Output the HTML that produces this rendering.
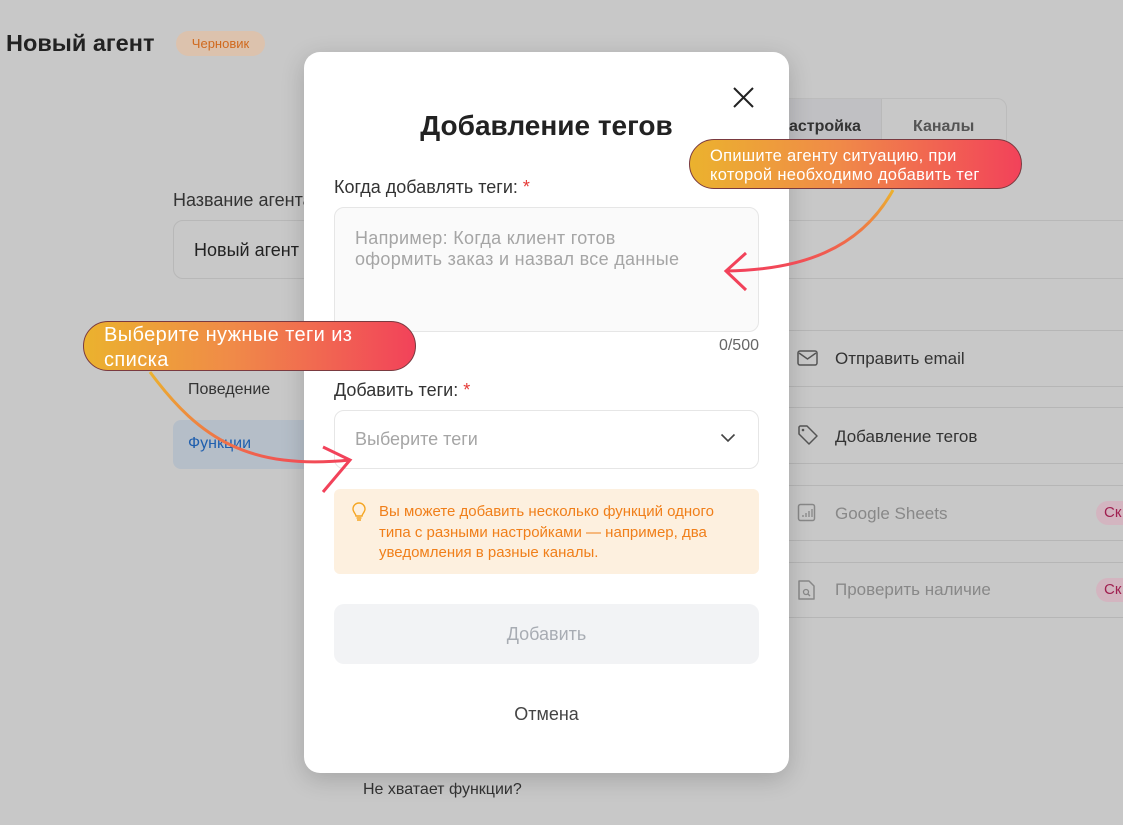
<!DOCTYPE html>
<html><head><meta charset="utf-8"><style>
*{box-sizing:border-box;margin:0;padding:0}
body{width:1123px;height:825px;overflow:hidden;background:#c8c8c8;font-family:"Liberation Sans",sans-serif;position:relative;color:#222}
.a{position:absolute}
.line{position:absolute;left:789px;width:334px;height:1px;background:#b6b6b6}
.row{position:absolute;left:835px;font-size:17px}
.ic{position:absolute;left:797px}
.tip{position:absolute;background:linear-gradient(90deg,#ebb22e,#f08a48 45%,#f2425a);border:1px solid #7a3a40;border-radius:26px;color:#fff;white-space:nowrap}
</style></head><body>
<div class="a" style="left:6px;top:30px;font-size:23.5px;font-weight:bold;color:#222">Новый агент</div>
<div class="a" style="left:176px;top:31px;width:89px;height:25px;border-radius:13px;background:#dcc2ad;color:#d0691e;font-size:13px;text-align:center;line-height:25px">Черновик</div>
<div class="a" style="left:760px;top:98px;width:247px;height:58px;border:1px solid #bcbcbc;border-radius:10px;background:#c8c8c8"></div>
<div class="a" style="left:760px;top:99px;width:122px;height:56px;background:#c0c0c3;border-right:1px solid #b9b9b9"></div>
<div class="a" style="left:789px;top:118px;font-size:16px;font-weight:bold;color:#333">астройка</div>
<div class="a" style="left:913px;top:118px;font-size:16px;font-weight:bold;color:#555">Каналы</div>
<div class="a" style="left:173px;top:190px;font-size:18px;color:#333">Название агента</div>
<div class="a" style="left:173px;top:220px;width:1000px;height:59px;border:1px solid #b8b8b8;border-radius:10px"></div>
<div class="a" style="left:194px;top:240px;font-size:18px;color:#222">Новый агент</div>
<div class="a" style="left:188px;top:381px;font-size:16px;color:#333">Поведение</div>
<div class="a" style="left:173px;top:420px;width:160px;height:49px;border-radius:8px;background:#b5bec8"></div>
<div class="a" style="left:188px;top:435px;font-size:16px;color:#1f5fae">Функции</div>
<div class="line" style="top:330px"></div><div class="line" style="top:386px"></div>
<div class="line" style="top:407px"></div><div class="line" style="top:463px"></div>
<div class="line" style="top:485px"></div><div class="line" style="top:540px"></div>
<div class="line" style="top:562px"></div><div class="line" style="top:617px"></div>
<svg class="ic" style="top:349px" width="22" height="18" viewBox="0 0 22 18"><rect x="1" y="2" width="19" height="14" rx="2" fill="none" stroke="#555" stroke-width="1.5"/><path d="M2 4l8.5 6 8.5-6" fill="none" stroke="#555" stroke-width="1.5"/></svg>
<div class="row" style="top:349px;color:#333">Отправить email</div>
<svg class="ic" style="top:424px" width="22" height="22" viewBox="0 0 22 22"><path d="M2 3v7l10 10 8-8L10 2H3z" fill="none" stroke="#555" stroke-width="1.5" stroke-linejoin="round"/><circle cx="6" cy="6" r="1.3" fill="#555"/></svg>
<div class="row" style="top:427px;color:#333">Добавление тегов</div>
<svg class="ic" style="top:503px" width="20" height="20" viewBox="0 0 20 20"><rect x="1.5" y="1.5" width="16" height="16" rx="2" fill="none" stroke="#888" stroke-width="1.5"/><path d="M6 14v-2M9 14v-4M12 14v-6M15 14V6" stroke="#888" stroke-width="1.3"/></svg>
<div class="row" style="top:504px;color:#888">Google Sheets</div>
<div class="a" style="left:1096px;top:501px;width:50px;height:24px;border-radius:12px;background:#d3b5c0;color:#a02050;font-size:15px;line-height:24px;padding-left:8px">Ск</div>
<svg class="ic" style="top:579px" width="20" height="22" viewBox="0 0 20 22"><path d="M2 2h10l5 5v13H2z" fill="none" stroke="#888" stroke-width="1.5" stroke-linejoin="round"/><circle cx="9" cy="13" r="2.5" fill="none" stroke="#888" stroke-width="1.3"/><path d="M11 15l2 2" stroke="#888" stroke-width="1.3"/></svg>
<div class="row" style="top:580px;color:#888">Проверить наличие</div>
<div class="a" style="left:1096px;top:578px;width:50px;height:24px;border-radius:12px;background:#d3b5c0;color:#a02050;font-size:15px;line-height:24px;padding-left:8px">Ск</div>
<div class="a" style="left:363px;top:781px;font-size:16px;color:#333">Не хватает функции?</div>

<div class="a" style="left:304px;top:52px;width:485px;height:721px;background:#fff;border-radius:16px;box-shadow:0 6px 24px rgba(0,0,0,.18)"></div>
<svg class="a" style="left:733px;top:87px" width="21" height="21" viewBox="0 0 21 21"><path d="M1 1l19 19M20 1L1 20" stroke="#222" stroke-width="2"/></svg>
<div class="a" style="left:304px;top:110px;width:485px;text-align:center;font-size:28px;font-weight:bold;color:#222">Добавление тегов</div>
<div class="a" style="left:334px;top:177px;font-size:18px;color:#333">Когда добавлять теги: <span style="color:#e53935">*</span></div>
<div class="a" style="left:334px;top:207px;width:425px;height:125px;background:#fafafa;border:1px solid #e6e6e6;border-radius:10px"></div>
<div class="a" style="left:355px;top:228px;font-size:18px;line-height:21px;color:#a5a5a5;width:390px;letter-spacing:.3px">Например: Когда клиент готов<br>оформить заказ и назвал все данные</div>
<div class="a" style="left:600px;top:337px;width:159px;text-align:right;font-size:16px;color:#666">0/500</div>
<div class="a" style="left:334px;top:380px;font-size:18px;color:#333">Добавить теги: <span style="color:#e53935">*</span></div>
<div class="a" style="left:334px;top:410px;width:425px;height:59px;border:1px solid #e6e6e6;border-radius:10px"></div>
<div class="a" style="left:355px;top:429px;font-size:18px;color:#a5a5a5">Выберите теги</div>
<svg class="a" style="left:720px;top:433px" width="16" height="10" viewBox="0 0 16 10"><path d="M1.5 1.5l6.5 6.5 6.5-6.5" fill="none" stroke="#444" stroke-width="1.6"/></svg>
<div class="a" style="left:334px;top:489px;width:425px;height:85px;background:#fdf0df;border-radius:6px"></div>
<svg class="a" style="left:351px;top:502px" width="16" height="20" viewBox="0 0 16 20"><path d="M5 14c0-2-3-4-3-7a6 6 0 0 1 12 0c0 3-3 5-3 7z M5.5 16h5M6 18h4" fill="none" stroke="#f5a623" stroke-width="1.4"/></svg>
<div class="a" style="left:379px;top:502px;font-size:15px;line-height:20.5px;color:#f07f1a;width:380px;white-space:nowrap">Вы можете добавить несколько функций одного<br>типа с разными настройками — например, два<br>уведомления в разные каналы.</div>
<div class="a" style="left:334px;top:604px;width:425px;height:60px;background:#f2f3f5;border-radius:10px;text-align:center;line-height:60px;font-size:18px;color:#a8acb3">Добавить</div>
<div class="a" style="left:304px;top:704px;width:485px;text-align:center;font-size:18px;color:#444">Отмена</div>

<svg class="a" style="left:0;top:0" width="1123" height="825">
<defs>
<linearGradient id="g1" x1="0" y1="0" x2="0" y2="1"><stop offset="0" stop-color="#ebb22e"/><stop offset="1" stop-color="#f2425a"/></linearGradient>
<linearGradient id="g2" x1="0" y1="0" x2="1" y2="1"><stop offset="0" stop-color="#ebb22e"/><stop offset="1" stop-color="#f2425a"/></linearGradient>
</defs>
<path d="M893 190C860 250 800 270 726 271" fill="none" stroke="url(#g1)" stroke-width="3"/>
<path d="M746 253L726 271 746 290" fill="none" stroke="#f2425a" stroke-width="3"/>
<path d="M150 372C200 440 250 470 350 460" fill="none" stroke="url(#g2)" stroke-width="3"/>
<path d="M323 447L350 460 323 492" fill="none" stroke="#f2425a" stroke-width="3"/>
</svg>
<div class="tip" style="left:689px;top:139px;width:333px;height:50px;padding:7px 0 0 20px;font-size:16.5px;line-height:19px;letter-spacing:.3px">Опишите агенту ситуацию, при<br>которой необходимо добавить тег</div>
<div class="tip" style="left:83px;top:321px;width:333px;height:50px;padding:1px 0 0 20px;font-size:20px;line-height:25px;border-radius:25px;letter-spacing:.4px">Выберите нужные теги из<br>списка</div>
</body></html>
